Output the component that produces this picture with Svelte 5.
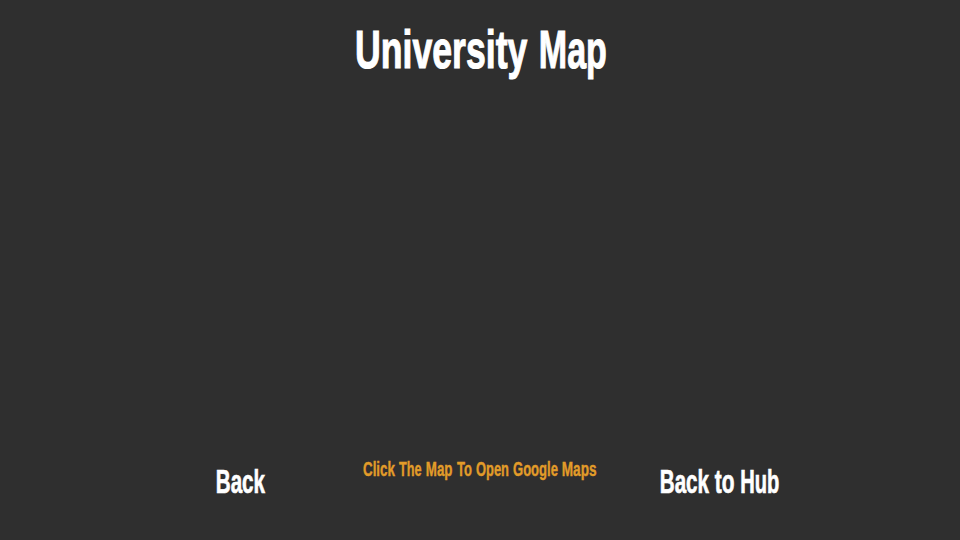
<script>
  // Each word: text, left edge, horizontal condensing factor
  const title = {
    width: 251, height: 54, size: 54, baseline: 42.5, stroke: 1.1,
    words: [['University', 0, 0.66], ['Map', 183.8, 0.63]]
  };
  const hint = {
    width: 234, height: 24, size: 21, baseline: 18, stroke: 0.4,
    words: [['Click', 0, 0.637], ['The', 36, 0.603], ['Map', 62.8, 0.635], ['To', 94, 0.62], ['Open', 113, 0.615], ['Google', 150, 0.622], ['Maps', 198.7, 0.65]]
  };
  const back = {
    width: 49, height: 32, size: 32.6, baseline: 26.5, stroke: 0.7,
    words: [['Back', -0.2, 0.632]]
  };
  const hub = {
    width: 119, height: 32, size: 32.6, baseline: 26.5, stroke: 0.7,
    words: [['Back', -0.2, 0.632], ['to', 54.8, 0.64], ['Hub', 80.3, 0.617]]
  };
</script>

{#snippet label(l)}
  <svg class="label" width={l.width} height={l.height} font-size={l.size} stroke-width={l.stroke}>
    {#each l.words as [word, x, squeeze]}
      <text transform="translate({x} {l.baseline}) scale({squeeze} 1)">{word}</text>
    {/each}
  </svg>
{/snippet}

<main class="screen">
  <h1 class="title">{@render label(title)}</h1>
  <div class="map"></div>
  <footer class="footer">
    <button class="action">{@render label(back)}</button>
    <p class="hint">{@render label(hint)}</p>
    <button class="action">{@render label(hub)}</button>
  </footer>
</main>

<style>
  :global(body) {
    margin: 0;
    background: #2f2f2f;
  }
  .screen {
    width: 960px;
    height: 540px;
    box-sizing: border-box;
    padding-top: 25px;
    display: flex;
    flex-direction: column;
    background: #2f2f2f;
    color: #fff;
    font-family: "Liberation Sans", Arial, sans-serif;
    font-weight: 700;
    overflow: hidden;
  }
  .title {
    display: flex;
    justify-content: center;
    margin: 0;
  }
  .map {
    flex: 1;
  }
  .footer {
    display: flex;
    align-items: flex-start;
    height: 82px;
    padding-left: 216px;
  }
  .label {
    display: block;
    fill: currentColor;
    stroke: currentColor;
    font-weight: 700;
    overflow: visible;
  }
  .action {
    padding: 0;
    border: 0;
    background: none;
    color: inherit;
    font-family: inherit;
    cursor: pointer;
    margin-top: 8px;
  }
  .hint {
    margin: 0 63px 0 98px;
    color: #e29c29;
  }
</style>
